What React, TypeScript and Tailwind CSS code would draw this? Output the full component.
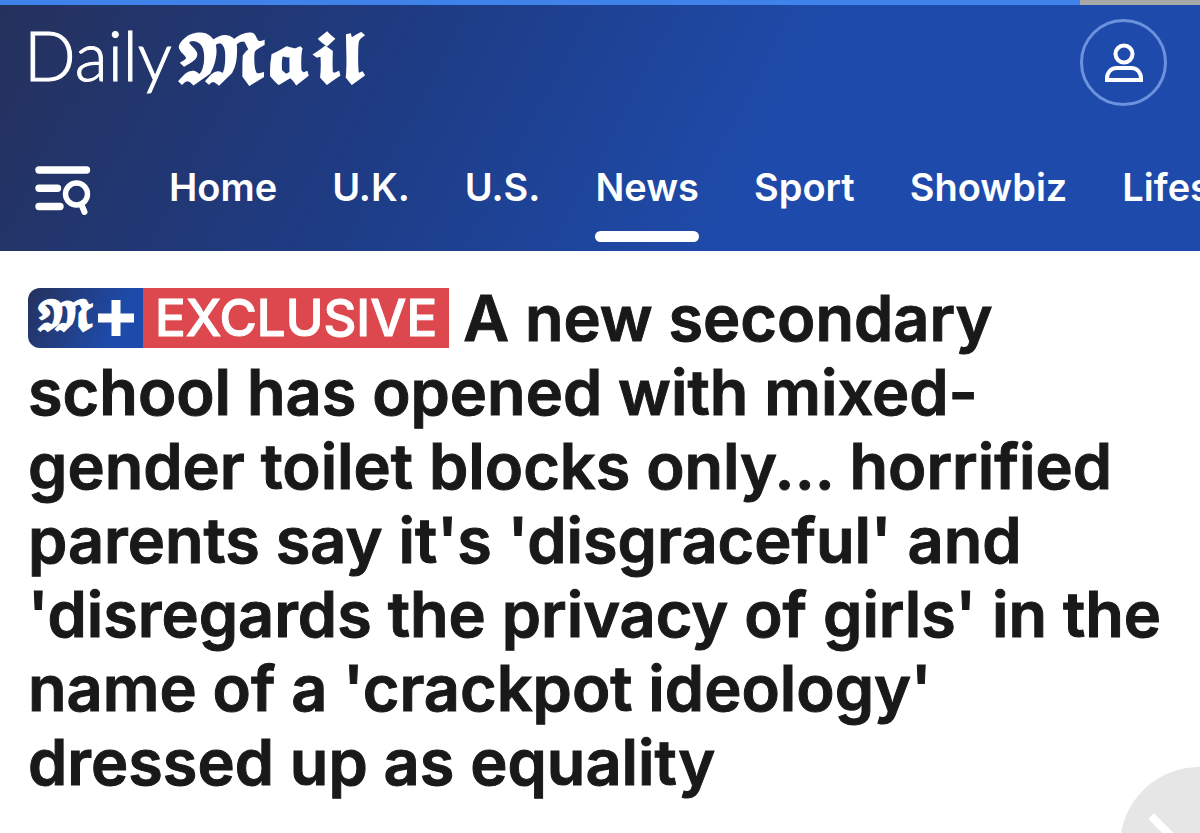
import React from 'react';

const navItems = ['Home', 'U.K.', 'U.S.', 'News', 'Sport', 'Showbiz', 'Lifestyle'];

const Logo = () => (
  <a href="#" aria-label="Daily Mail" className="flex items-baseline gap-1 leading-[72px] text-white">
    <span className="font-[Lato,sans-serif] text-[68px] font-light [-webkit-text-stroke:1px_white]">Daily</span>
    <span className="font-['DejaVu_Math_TeX_Gyre','DejaVu_Sans',serif] text-[60px] [-webkit-text-stroke:4px_white]">𝕸𝖆𝖎𝖑</span>
  </a>
);

const MenuIcon = () => (
  <svg className="h-[52px] w-[56px]" viewBox="0 0 56 52" fill="none" stroke="currentColor" strokeLinecap="round" strokeWidth="7.4">
    <path d="M4 5h47.500M4 23.300h18.500M4 41.500h21" />
    <circle cx="41.500" cy="29" r="11" strokeWidth="5.4" />
    <path d="M47 41l2.500 6" strokeWidth="6" />
  </svg>
);

const UserIcon = () => (
  <svg className="h-10 w-10" viewBox="0 0 40 40" fill="none" stroke="currentColor" strokeWidth="4">
    <circle cx="20" cy="11" r="8.500" />
    <path d="M3 37v-1.500C3 29.500 7 25 12.500 25h15C33 25 37 29.500 37 35.500V37z" />
  </svg>
);

const Header = () => (
  <header className="bg-[linear-gradient(118deg,#25315c_0%,#1e3c85_34%,#1e4bab_64%,#1e4bab_100%)] text-white">
    <div className="h-[5px] bg-[#a8a8a8]">
      <div className="h-full w-[90%] bg-[#3f83ea]" />
    </div>
    <div className="flex h-[120px] items-start justify-between pt-[14px] pr-[33px] pl-6">
      <Logo />
      <button aria-label="Account" className="flex h-[87px] w-[87px] items-center justify-center rounded-full border-[3px] border-[#6d92dd]">
        <UserIcon />
      </button>
    </div>
    <div className="flex h-[126px] items-start overflow-hidden pl-[35px]">
      <button aria-label="Menu and search" className="mt-10 shrink-0">
        <MenuIcon />
      </button>
      <nav className="ml-[78px] flex h-full gap-[55px] font-[Inter,sans-serif] text-[38px] leading-[48px] font-semibold whitespace-nowrap">
        {navItems.map((item) => (
          <a key={item} href="#" className="flex flex-col pt-[38px]">
            {item}
            {item === 'News' && <span className="mt-5 h-[11px] rounded-full bg-white" />}
          </a>
        ))}
      </nav>
    </div>
  </header>
);

const Badge = () => (
  <span className="mt-[7px] mr-[14px] inline-flex h-[60px] items-stretch overflow-hidden rounded-l-xl align-top leading-[60px] text-white">
    <span className="flex w-[115px] items-center justify-center gap-1 bg-[linear-gradient(117deg,#25315c_0%,#1e4bab_75%)]">
      <span className="font-['DejaVu_Math_TeX_Gyre','DejaVu_Sans',serif] text-[38px] font-normal [-webkit-text-stroke:3px_white]">𝕸</span>
      <svg className="h-9 w-9" viewBox="0 0 36 36" fill="none" stroke="currentColor" strokeWidth="9">
        <path d="M18 0v36M0 18h36" />
      </svg>
    </span>
    <span className="bg-[#dd484e] px-3 text-[51px] font-medium">EXCLUSIVE</span>
  </span>
);

const App = () => {
  return (
    <div className="relative min-h-screen overflow-hidden bg-white">
      <Header />
      <main className="pt-[30px] pr-6 pl-7">
        <h1 className="font-[Inter,sans-serif] text-[63px] leading-[74px] font-semibold text-[#191919] [-webkit-text-stroke:1px]">
          <Badge />
          A new secondary school has opened with mixed-gender toilet blocks only... horrified parents say it's
          'disgraceful' and 'disregards the privacy of girls' in the name of a 'crackpot ideology' dressed up as equality
        </h1>
      </main>
      <button aria-label="Next article" className="fixed -right-[78px] -bottom-[92px] flex h-[158px] w-[158px] items-center justify-center rounded-full bg-[#e6e6e6] text-white">
        <svg className="h-[100px] w-[100px]" viewBox="0 0 100 100" fill="none" stroke="currentColor" strokeWidth="8">
          <path d="M2 20L50 68L98 20" />
        </svg>
      </button>
    </div>
  );
};

export default App;
